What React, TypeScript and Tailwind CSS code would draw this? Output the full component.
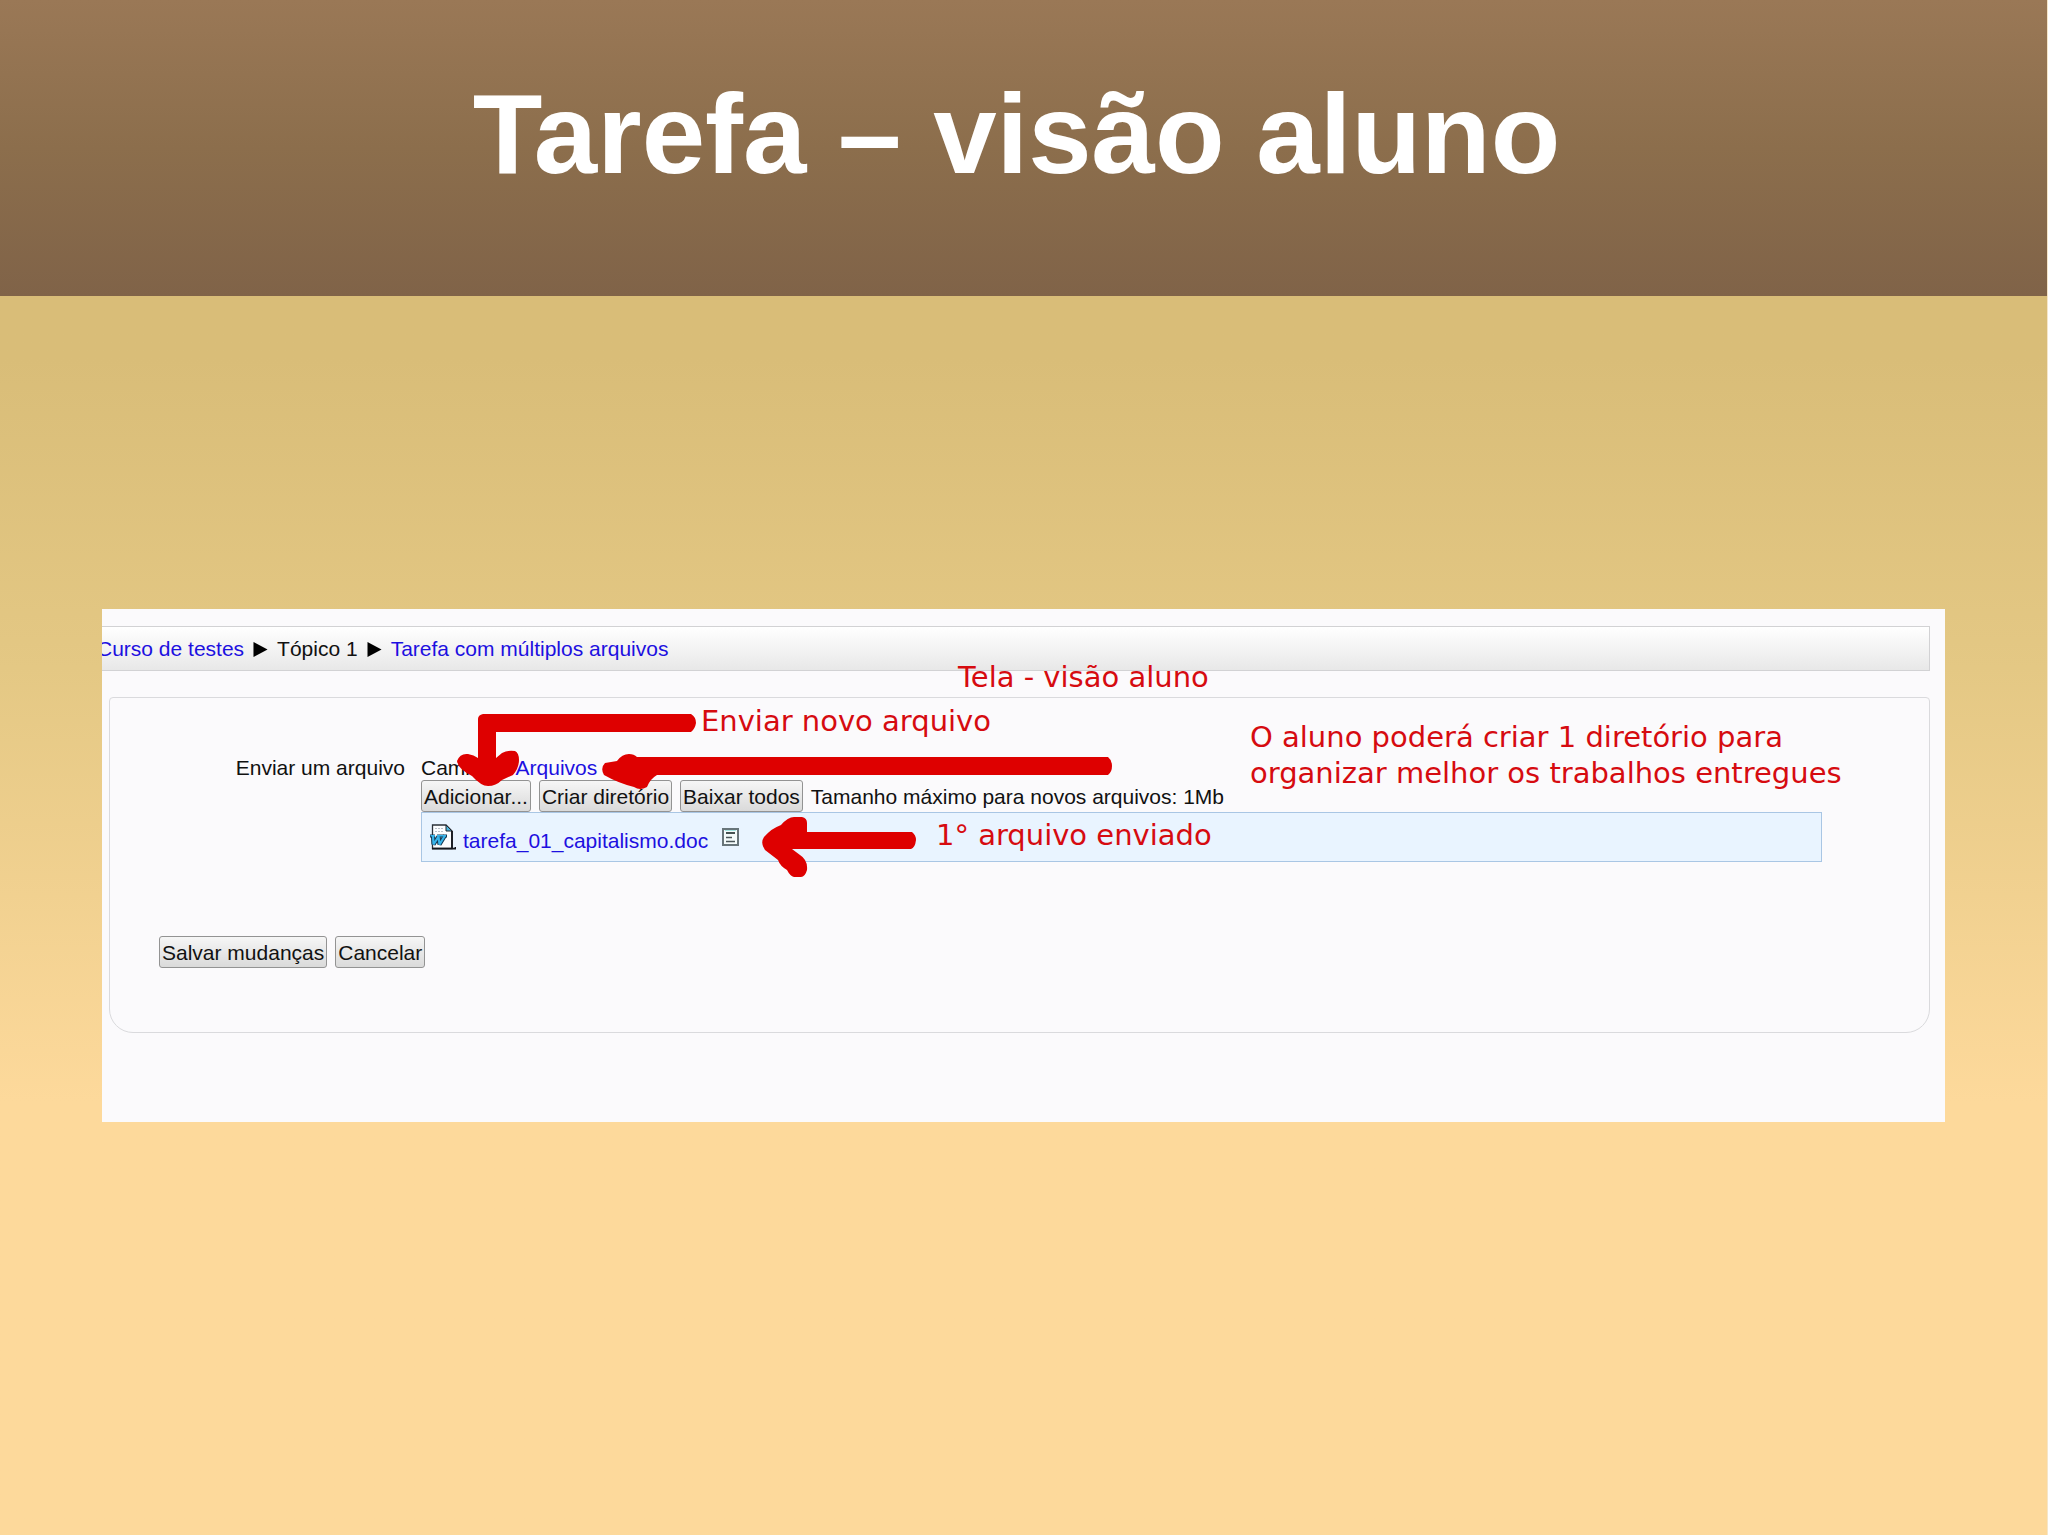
import type { ReactNode } from "react";

function FormButton({ children }: { children: ReactNode }) {
  return (
    <button
      type="button"
      className="h-8 cursor-pointer whitespace-nowrap rounded-[3px] border border-[#939393] bg-linear-to-b from-[#f6f6f6] to-[#dadada] px-0.5 pt-0.5 text-[21px] leading-6 text-[#111]"
    >
      {children}
    </button>
  );
}

function TextLink({ children }: { children: ReactNode }) {
  return (
    <a href="#" className="whitespace-nowrap text-[#1d10e0]">
      {children}
    </a>
  );
}

function Separator() {
  return (
    <svg aria-hidden="true" viewBox="0 0 15 16" className="h-[15px] w-[15px] fill-black">
      <path d="M0 0 L15 8 L0 16 Z" />
    </svg>
  );
}

function WordIcon() {
  return (
    <svg aria-hidden="true" viewBox="0 0 26 26" className="h-[26px] w-[26px]">
      <path d="M2.500 1 H16 L22 7 V24.500 H2.500 Z" fill="#fbfdff" stroke="#2a3038" strokeWidth="1.300" />
      <path d="M5 4.500 H14 M5 7.500 H14" stroke="#b9c0c9" strokeWidth="1" strokeDasharray="2 1" />
      <path d="M16 1 V7 H22 Z" fill="#4fb6dc" stroke="#20242c" strokeWidth="1" />
      <path d="M22 7 V24" stroke="#15181e" strokeWidth="1.800" />
      <path d="M2 24.600 H25.500 V23" fill="none" stroke="#15181e" strokeWidth="1.800" />
      <g fill="none" strokeLinejoin="bevel">
        <path d="M0 12 H5 M7 12 H17" stroke="#12354f" strokeWidth="3" />
        <path
          d="M3 11.500 L3.500 20.500 L8.500 12.500 L9.500 20.500 L15 11.500"
          stroke="#12354f"
          strokeWidth="4.200"
        />
        <path d="M0.500 11.800 H5 M7 11.800 H16" stroke="#38b4ea" strokeWidth="1.400" />
        <path
          d="M3 11.500 L3.500 20.500 L8.500 12.500 L9.500 20.500 L15 11.500"
          stroke="#38b4ea"
          strokeWidth="2.200"
        />
      </g>
    </svg>
  );
}

function NotesIcon() {
  return (
    <svg aria-hidden="true" viewBox="0 0 17 18" className="h-[18px] w-[17px]">
      <rect x="1" y="1" width="15" height="16" fill="#f4fbfb" stroke="#68757a" strokeWidth="2" />
      <path d="M3 2.500 H14" stroke="#a5e5e2" strokeWidth="1" />
      <path d="M4 5 H13" stroke="#0d1a1a" strokeWidth="1.500" />
      <path d="M4 9.500 H10 M4 13.500 H13" stroke="#4a5558" strokeWidth="1.500" />
    </svg>
  );
}

function Arrows() {
  return (
    <svg
      aria-hidden="true"
      viewBox="102 609 1843 513"
      className="pointer-events-none absolute left-0 top-0 h-[513px] w-[1843px] fill-[#de0000]"
    >
      <path d="M483 714 H691 Q696 717 696 723 Q695 729 691 732 H496 V758 L502 753 Q507 750 515 751 Q519 753 519 760 Q519 768 513 775 L502 780 Q496 786 488 786 Q481 786 472 776 Q458 769 457 761 Q460 753 468 754 Q474 755 478 758 V719 Q478 715 483 714 Z" />
      <path d="M637 757 H1108 Q1112 760 1112 766 Q1112 772 1108 775 H657 Q650 779 647 787 Q640 791 634 787 Q618 783 604 775 Q600 768 605 763 L617 761 Q622 754 629 754 Q634 754 637 757 Z" />
      <path d="M807 832 H912 Q916 835 916 840 Q915 848 911 849 H792 L800 855 Q808 860 807 870 Q805 877 801 877 H794 Q790 876 787 870 Q780 866 778 860 L765 850 Q760 843 764 837 Q772 828 781 825 Q788 817 794 817 H802 Q807 818 807 823 Z" />
    </svg>
  );
}

const noteClass =
  "absolute whitespace-nowrap font-['DejaVu_Sans',sans-serif] text-[29px] leading-9 text-[#d60b10]";

export default function App() {
  return (
    <div className="flex min-h-screen flex-col border-r border-[#f6e6c8] bg-[#fdd99b] font-['Liberation_Sans',Arial,sans-serif]">
      <header className="bg-linear-to-b from-[#9a7856] via-[#8c6e4c] to-[#806348] pb-[102px] pr-[14px] pt-[74px]">
        <h1 className="text-center text-[114px] font-bold leading-[120px] text-white">
          Tarefa – visão aluno
        </h1>
      </header>

      <main className="grow bg-linear-to-b from-[#d9bd78] from-5% via-[#e4c884] via-30% to-[#fdd99b] to-65% px-[102px] pb-16 pt-[313px]">
        <section className="relative overflow-hidden bg-[#fbfafc] pb-[89px] pt-[17px] text-[21px] leading-6 text-[#111]">
          <nav
            aria-label="Trilha"
            className="mr-[15px] flex items-center gap-[9px] border-y border-r border-[#d2d2d4] bg-linear-to-b from-white to-[#e8e8e8] pb-[9px] pt-[10px]"
          >
            <span className="-ml-[5px]">
              <TextLink>Curso de testes</TextLink>
            </span>
            <Separator />
            <span>Tópico 1</span>
            <Separator />
            <TextLink>Tarefa com múltiplos arquivos</TextLink>
          </nav>

          <form className="ml-[7px] mr-[15px] mt-[26px] rounded-t rounded-b-[24px] border border-[#dadadd] pb-16 pl-[49px] pr-[107px] pt-[58px]">
            <div className="grid grid-cols-[246px_1fr] gap-x-4">
              <span className="text-right">Enviar um arquivo</span>
              <div>
                <div>
                  Caminho: <TextLink>Arquivos</TextLink>
                </div>
                <div className="flex items-center gap-2">
                  <FormButton>Adicionar...</FormButton>
                  <FormButton>Criar diretório</FormButton>
                  <FormButton>Baixar todos</FormButton>
                  <span className="pt-0.5">Tamanho máximo para novos arquivos: 1Mb</span>
                </div>
                <div className="flex h-[50px] items-center border border-[#a9c6e4] bg-[#e9f4ff] pl-2">
                  <WordIcon />
                  <span className="ml-[7px] pt-2">
                    <TextLink>tarefa_01_capitalismo.doc</TextLink>
                  </span>
                  <span className="ml-[14px]">
                    <NotesIcon />
                  </span>
                </div>
              </div>
            </div>

            <div className="mt-[74px] flex gap-2">
              <FormButton>Salvar mudanças</FormButton>
              <FormButton>Cancelar</FormButton>
            </div>
          </form>

          <Arrows />
          <p className={`${noteClass} left-[856px] top-[50px]`}>Tela - visão aluno</p>
          <p className={`${noteClass} left-[599px] top-[94px]`}>Enviar novo arquivo</p>
          <p className={`${noteClass} left-[1148px] top-[110px]`}>
            O aluno poderá criar 1 diretório para
            <br />
            organizar melhor os trabalhos entregues
          </p>
          <p className={`${noteClass} left-[834px] top-[208px]`}>1° arquivo enviado</p>
        </section>
      </main>
    </div>
  );
}
